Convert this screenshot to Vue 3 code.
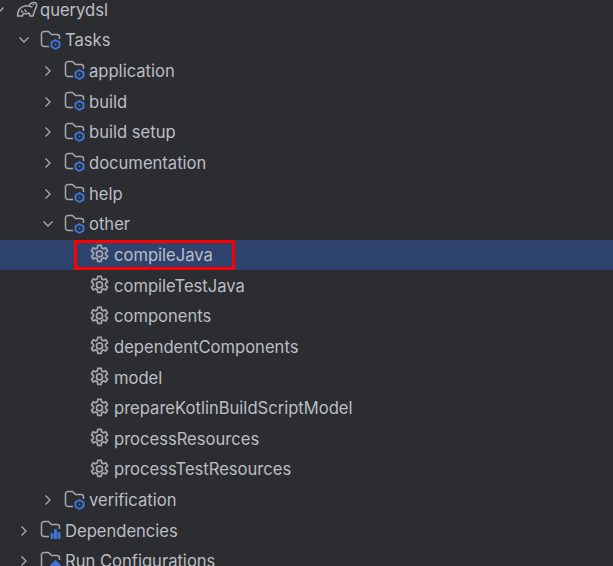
<script setup>
const rows = [
  { label: 'querydsl', indent: 0, arrow: 'down', icon: 'gradle' },
  { label: 'Tasks', indent: 1, arrow: 'down', icon: 'tasks' },
  { label: 'application', indent: 2, arrow: 'right', icon: 'tasks' },
  { label: 'build', indent: 2, arrow: 'right', icon: 'tasks' },
  { label: 'build setup', indent: 2, arrow: 'right', icon: 'tasks' },
  { label: 'documentation', indent: 2, arrow: 'right', icon: 'tasks' },
  { label: 'help', indent: 2, arrow: 'right', icon: 'tasks' },
  { label: 'other', indent: 2, arrow: 'down', icon: 'tasks' },
  { label: 'compileJava', indent: 3, icon: 'gear', selected: true },
  { label: 'compileTestJava', indent: 3, icon: 'gear' },
  { label: 'components', indent: 3, icon: 'gear' },
  { label: 'dependentComponents', indent: 3, icon: 'gear' },
  { label: 'model', indent: 3, icon: 'gear' },
  { label: 'prepareKotlinBuildScriptModel', indent: 3, icon: 'gear' },
  { label: 'processResources', indent: 3, icon: 'gear' },
  { label: 'processTestResources', indent: 3, icon: 'gear' },
  { label: 'verification', indent: 2, arrow: 'right', icon: 'tasks' },
  { label: 'Dependencies', indent: 1, arrow: 'right', icon: 'deps' },
  { label: 'Run Configurations', indent: 1, arrow: 'right', icon: 'run' },
]
const folder = 'M9 17.500H4a2.500 2.500 0 0 1-2.500-2.500V5A2.500 2.500 0 0 1 4 2.500h4.500l3 3H17A2.500 2.500 0 0 1 19.500 8v2'
const gear = 'M8 1.200h3l.5 2.300 1.500.8 2.200-.8 1.500 2.600-1.700 1.600v1.600l1.700 1.600-1.500 2.600-2.200-.8-1.500.8-.5 2.300H8l-.5-2.300-1.500-.8-2.200.8-1.500-2.600 1.700-1.600V7.700L2.300 6.100l1.500-2.600 2.200.8 1.500-.8z'
</script>

<template>
  <div class="tree">
    <div
      v-for="row in rows"
      :key="row.label"
      class="row"
      :class="[`indent-${row.indent}`, { selected: row.selected }]"
    >
      <svg v-if="row.arrow" class="arrow" viewBox="0 0 12 12">
        <path v-if="row.arrow === 'down'" d="M1.500 3.500 6 8l4.500-4.500" />
        <path v-else d="M3.500 1.500 8 6l-4.500 4.500" />
      </svg>
      <span v-else class="arrow"></span>

      <svg v-if="row.icon === 'gradle'" class="icon elephant" viewBox="0 0 22 16">
        <path class="line" d="M1.500 15C1.500 10 4 6 9 5c2-.4 3 0 4 0 1-2.500 3.500-3.500 5-3.500 2 0 3 1.500 2.500 3.500-.5 2.500-2.500 5-3.500 10h-3c0-1.500-.5-2.500-1-3-2 1-3.500 1-5 .5-1 .5-1.500 1.500-1.500 2.500z" />
        <path class="line" d="M13 5c1 .8 2.200 1 3.500.5M5 9.500l2 2M8.500 8.500l2 2.500" />
        <circle class="dot" cx="17.300" cy="3.600" r=".8" />
      </svg>

      <svg v-else-if="row.icon === 'gear'" class="icon gear" viewBox="0 0 19 19">
        <path class="line" :d="gear" />
        <circle class="line" cx="9.500" cy="9" r="2.700" />
      </svg>

      <svg v-else class="icon folder" viewBox="0 0 23 23">
        <path class="line" :d="folder" />
        <g v-if="row.icon === 'tasks'">
          <path class="blue" d="M15.500 11l4 2.300v4.400l-4 2.300-4-2.300v-4.400z" />
          <circle class="fill" cx="15.500" cy="15.500" r="1" />
        </g>
        <g v-else-if="row.icon === 'deps'">
          <rect class="fill" x="10.500" y="14" width="3" height="6" rx=".8" />
          <rect class="fill" x="14" y="10" width="3" height="10" rx=".8" />
          <rect class="fill" x="17.500" y="13" width="3" height="7" rx=".8" />
        </g>
        <g v-else>
          <path class="fill" d="M15.500 10l5 4.500V21h-3.500v-3h-3v3h-3.500v-6.500z" />
        </g>
      </svg>

      <span class="label">{{ row.label }}</span>
      <span v-if="row.selected" class="mark"></span>
    </div>
  </div>
</template>

<style scoped>
.tree {
  width: 613px;
  height: 566px;
  overflow: hidden;
  background: #2b2d30;
  color: #bcbec4;
  font-family: Inter, "Noto Sans", sans-serif;
  font-size: 16.580px;
}
.row {
  position: relative;
  display: flex;
  align-items: center;
  height: 30.660px;
  white-space: nowrap;
}
.row:first-child {
  margin-top: -5.700px;
}
.indent-1 { padding-left: 18px; }
.indent-2 { padding-left: 42px; }
.indent-3 { padding-left: 66px; }
.selected { background: #2e436e; }
.arrow {
  flex: none;
  width: 12px;
  height: 12px;
  margin-right: 10px;
  fill: none;
  stroke: #a8abb0;
  stroke-width: 1.300;
}
.indent-0 .arrow {
  margin-left: -7px;
  margin-right: 11px;
}
.indent-3 .arrow {
  margin-right: 5px;
}
.icon {
  flex: none;
  width: 23px;
  height: 23px;
  margin-right: 2px;
}
.elephant {
  width: 22px;
  height: 16px;
  margin-top: -2px;
}
.gear {
  width: 21px;
  height: 21px;
  margin: 0 4.500px 0 5.500px;
}
.line {
  fill: none;
  stroke: #a4a7ac;
  stroke-width: 1.550;
}
.dot { fill: #a4a7ac; }
.blue {
  fill: none;
  stroke: #3d74d6;
  stroke-width: 2;
  stroke-linejoin: round;
}
.fill { fill: #3d74d6; }
.mark {
  position: absolute;
  left: 74px;
  top: 0;
  width: 161px;
  height: 30px;
  box-sizing: border-box;
  border: 3px solid #ff0000;
}
</style>
